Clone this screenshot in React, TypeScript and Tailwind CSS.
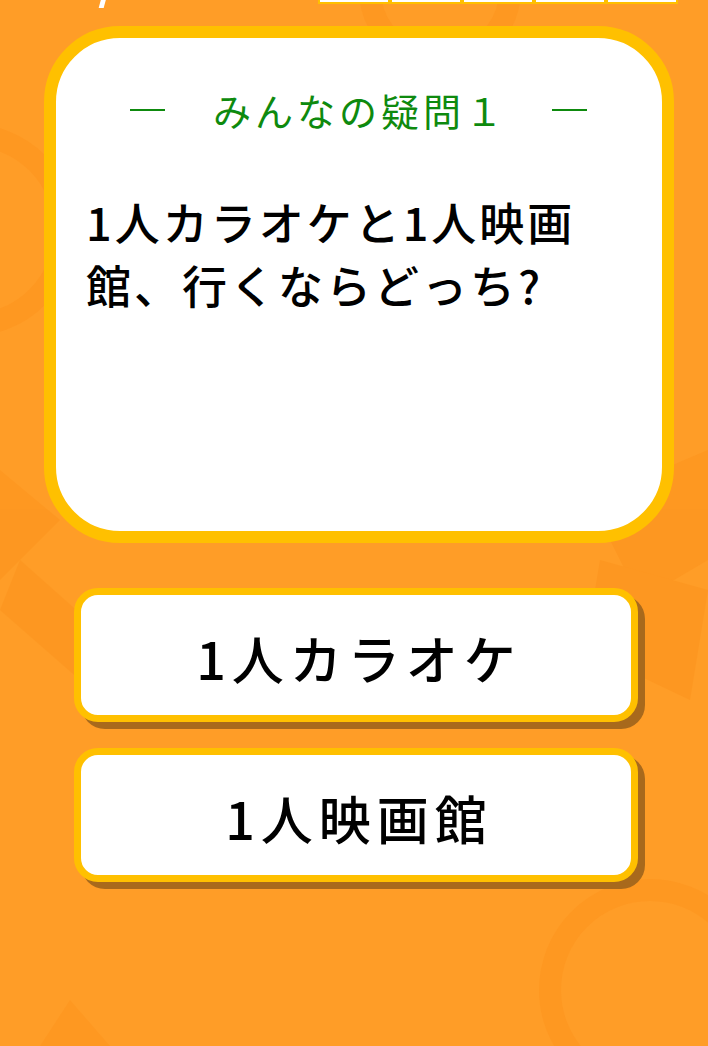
import React from 'react'

const font = { fontFamily: '"Noto Sans CJK JP", "Noto Sans", sans-serif' }

function Backdrop() {
  // faint decorative shapes behind the quiz
  return (
    <svg className="absolute inset-0 pointer-events-none" width="708" height="1046" viewBox="0 0 708 1046">
      <g fill="none" stroke="#fd931d" strokeWidth="22" opacity="0.55">
        <circle cx="-30" cy="230" r="95" />
        <circle cx="650" cy="990" r="100" />
        <circle cx="440" cy="-10" r="70" />
      </g>
      <g fill="#fd931d" opacity="0.55">
        <polygon points="0,470 60,520 0,580" />
        <polygon points="20,560 110,640 80,680 0,610" />
        <polygon points="590,500 708,450 708,560 640,600" />
        <polygon points="600,560 708,590 690,700 585,650" />
        <polygon points="70,1000 110,1046 40,1046" />
        <polygon points="160,610 200,620 190,660 150,650" />
      </g>
    </svg>
  )
}

function Choice({ label }: { label: string }) {
  return (
    <button
      className="ml-[74px] w-[564px] h-[134px] flex items-center justify-center rounded-[24px] border-[7px] border-[#ffc000] bg-white shadow-[7px_7px_0_#a8691c]"
    >
      <span className="text-[52px] leading-none font-medium tracking-[6px] text-black pt-[6px] pl-[6px]" style={font}>
        {label}
      </span>
    </button>
  )
}

export default function App() {
  return (
    <div className="relative w-[708px] min-h-[1046px] overflow-hidden bg-[#ff9d27]" style={font}>
      <Backdrop />

      {/* cut-off header above the card */}
      <div className="relative flex h-[4px]">
        <div className="ml-[100px] w-[5px] h-[10px] -mt-[2px] bg-white -skew-x-[15deg]" />
        <div className="ml-[213px] flex">
          {[0, 1, 2, 3, 4].map((i) => (
            <div key={i} className="w-[72px] h-[4px] bg-white border-x-[2px] border-b-[2px] border-[#ffc000]" />
          ))}
        </div>
      </div>

      <div className="relative mt-[22px] ml-[44px] w-[630px] h-[517px] rounded-[76px] border-[12px] border-[#ffc000] bg-white">
        <div className="pt-[48px] flex items-center h-[96px]">
          <div className="ml-[74px] w-[35px] h-[2px] bg-[#0e8a0e]" />
          <div className="ml-[48px] text-[38px] leading-[48px] tracking-[4px] text-[#0e8a0e]">みんなの疑問１</div>
          <div className="ml-[45px] w-[35px] h-[2px] bg-[#0e8a0e]" />
        </div>
        <p className="mt-[56px] ml-[30px] max-w-[515px] text-[45px] leading-[63px] font-medium tracking-[3px] text-black">
          1人カラオケと1人映画館、行くならどっち?
        </p>
      </div>

      <div className="relative mt-[45px] flex flex-col gap-[26px]">
        <Choice label="1人カラオケ" />
        <Choice label="1人映画館" />
      </div>
    </div>
  )
}
